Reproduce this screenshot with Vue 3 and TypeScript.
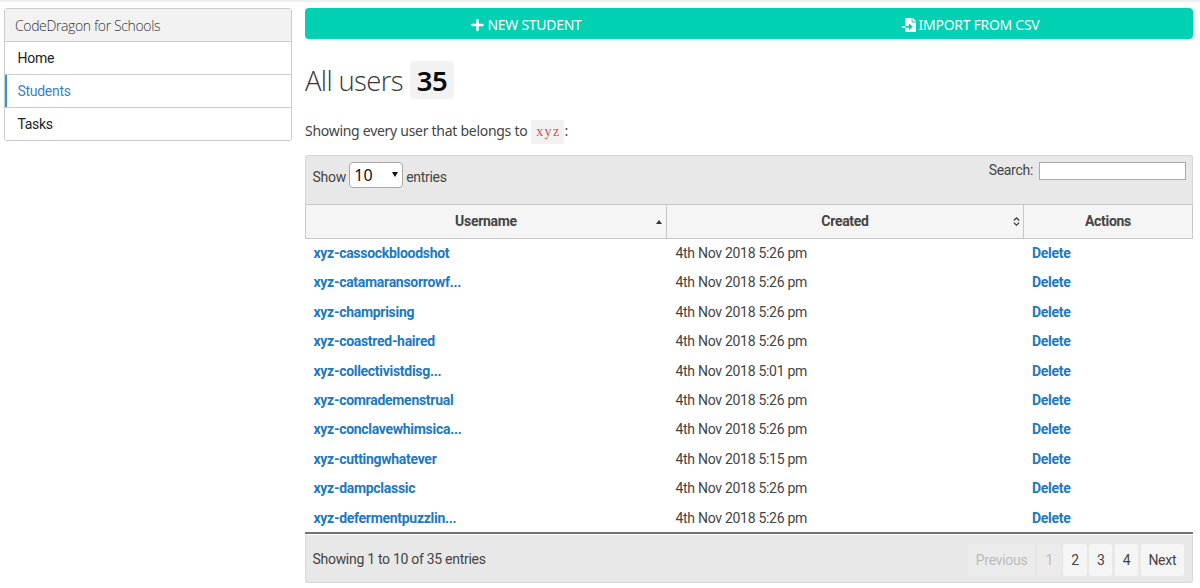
<script setup lang="ts">
import { ref } from 'vue'

interface Student {
  name: string
  created: string
}

const nav = ['Home', 'Students', 'Tasks']
const active = ref('Students')
const search = ref('')

const students: Student[] = [
  { name: 'xyz-cassockbloodshot', created: '4th Nov 2018 5:26 pm' },
  { name: 'xyz-catamaransorrowf...', created: '4th Nov 2018 5:26 pm' },
  { name: 'xyz-champrising', created: '4th Nov 2018 5:26 pm' },
  { name: 'xyz-coastred-haired', created: '4th Nov 2018 5:26 pm' },
  { name: 'xyz-collectivistdisg...', created: '4th Nov 2018 5:01 pm' },
  { name: 'xyz-comrademenstrual', created: '4th Nov 2018 5:26 pm' },
  { name: 'xyz-conclavewhimsica...', created: '4th Nov 2018 5:26 pm' },
  { name: 'xyz-cuttingwhatever', created: '4th Nov 2018 5:15 pm' },
  { name: 'xyz-dampclassic', created: '4th Nov 2018 5:26 pm' },
  { name: 'xyz-defermentpuzzlin...', created: '4th Nov 2018 5:26 pm' },
]
</script>

<template>
  <div class="page">
    <aside class="panel">
      <p class="panel-heading"><span>CodeDragon for Schools</span></p>
      <a v-for="item in nav" :key="item" class="panel-item" :class="{ active: item === active }" @click="active = item">
        <span>{{ item }}</span>
      </a>
    </aside>

    <main class="main">
      <div class="actions">
        <a class="action">
          <svg class="icon-plus" viewBox="0 0 448 512"><path fill="currentColor" d="M416 208H272V64c0-17.67-14.33-32-32-32h-32c-17.67 0-32 14.33-32 32v144H32c-17.67 0-32 14.33-32 32v32c0 17.67 14.33 32 32 32h144v144c0 17.67 14.33 32 32 32h32c17.67 0 32-14.33 32-32V304h144c17.67 0 32-14.33 32-32v-32c0-17.67-14.33-32-32-32z" /></svg>
          <span>NEW STUDENT</span>
        </a>
        <a class="action">
          <svg class="icon-import" viewBox="0 0 512 512"><path fill="currentColor" d="M16 288c-8.800 0-16 7.200-16 16v32c0 8.800 7.200 16 16 16h112v-64zm489-183L407.100 7c-4.500-4.500-10.600-7-17-7H384v128h128v-6.100c0-6.300-2.500-12.400-7-16.900zm-153 31V0H152c-13.300 0-24 10.700-24 24v264h128v-65.200c0-14.300 17.300-21.400 27.400-11.300L379 308c6.600 6.700 6.600 17.400 0 24l-95.700 96.400c-10.100 10.100-27.400 3-27.400-11.300V352H128v136c0 13.300 10.700 24 24 24h336c13.300 0 24-10.700 24-24V160H376c-13.200 0-24-10.800-24-24z" /></svg>
          <span>IMPORT FROM CSV</span>
        </a>
      </div>

      <h1 class="title"><span>All users</span><strong class="count">35</strong></h1>
      <p class="intro"><span>Showing every user that belongs to</span><code>xyz</code><span>:</span></p>

      <section class="datatable">
        <div class="toolbar">
          <label class="length">
            <span class="label">Show</span>
            <span class="select"><span>10</span><i class="caret"></i></span>
            <span class="label">entries</span>
          </label>
          <label class="search"><span>Search:</span><input v-model="search" type="text" /></label>
        </div>

        <div class="row head">
          <div class="th"><span>Username</span><i class="asc"></i></div>
          <div class="th">
            <span>Created</span>
            <svg class="both" viewBox="0 0 7 9"><path d="M.8 3.500 3.500.9 6.200 3.500M.8 5.600 3.500 8.200 6.200 5.600" fill="none" stroke="#333" stroke-width="1.200" /></svg>
          </div>
          <div class="th"><span>Actions</span></div>
        </div>

        <div class="body">
          <div v-for="s in students" :key="s.name" class="row">
            <div class="td"><a>{{ s.name }}</a></div>
            <div class="td"><span>{{ s.created }}</span></div>
            <div class="td"><a>Delete</a></div>
          </div>
        </div>

        <div class="footer">
          <span class="info">Showing 1 to 10 of 35 entries</span>
          <nav class="pager">
            <a class="prev off">Previous</a>
            <a class="off">1</a>
            <a>2</a>
            <a>3</a>
            <a>4</a>
            <a class="next">Next</a>
          </nav>
        </div>
      </section>
    </main>
  </div>
</template>

<style>
body {
  background: #fff;
}
</style>

<style scoped>
* {
  box-sizing: border-box;
}

.page {
  display: grid;
  grid-template-columns: 288px 888px;
  column-gap: 13px;
  align-items: start;
  height: 588px;
  padding: 6px 0 0 4px;
  border-top: 2px solid #f0f0f0;
  overflow: hidden;
  font: 14px/20px Roboto, sans-serif;
  letter-spacing: -0.290px;
  color: #444;
}

.panel {
  border: 1px solid #ccc;
  border-radius: 3px;
  overflow: hidden;
}

.panel-heading {
  display: flex;
  align-items: center;
  height: 33px;
  margin: 0;
  padding: 1px 10px 0;
  background: #f2f2f2;
  border-bottom: 1px solid #ccc;
  font: 300 14px/20px 'Open Sans', sans-serif;
  letter-spacing: -0.370px;
  color: #363636;
}

.panel-item {
  display: flex;
  align-items: center;
  height: 33px;
  padding: 0 12.500px;
  border-bottom: 1px solid #ccc;
  color: #222;
  cursor: pointer;
}

.panel-item:last-child {
  height: 32px;
  border-bottom: 0;
}

.panel-item.active {
  color: #3b83c0;
  box-shadow: inset 2px 0 #3794d2;
}

.actions {
  display: grid;
  grid-template-columns: 443px 445px;
  height: 31px;
  border-radius: 4px;
  background: #00d1b2;
  color: #fff;
  font: 14px/20px 'Noto Sans', sans-serif;
}

.action {
  display: flex;
  align-items: center;
  justify-content: center;
  gap: 3px;
  padding-top: 2px;
}

.icon-plus {
  width: 13px;
  height: 14px;
}

.icon-import {
  width: 14px;
  height: 14px;
}

.title {
  display: flex;
  align-items: center;
  gap: 7px;
  height: 38px;
  margin: 22px 0 0;
  font: 300 27.500px/38px 'Open Sans', sans-serif;
  letter-spacing: -0.650px;
  color: #363636;
}

.title > span {
  padding-top: 1px;
}

.count {
  width: 44px;
  height: 38px;
  border-radius: 3px;
  background: #f2f2f2;
  text-align: center;
  font: 600 27.500px/40px 'Noto Sans', sans-serif;
  letter-spacing: -0.500px;
  color: #0a0a0a;
}

.intro {
  display: flex;
  align-items: center;
  height: 24px;
  margin: 21px 0 0;
  font: 14px/20px 'Noto Sans', sans-serif;
  letter-spacing: -0.280px;
}

.intro span {
  margin-top: -3px;
}

.intro code {
  width: 33px;
  height: 24px;
  margin-left: 4px;
  padding-left: 1px;
  background: #f2f2f2;
  text-align: center;
  font: 14px/23px 'Liberation Serif', serif;
  letter-spacing: 1.300px;
  color: #d0505a;
}

.datatable {
  margin-top: 11px;
}

.toolbar {
  display: flex;
  justify-content: space-between;
  align-items: flex-start;
  height: 49px;
  padding: 6px 6px 0 6.500px;
  border: 1px solid #d5d5d5;
  border-bottom: 0;
  border-radius: 3px 3px 0 0;
  background: #e8e8e8;
}

.length {
  display: flex;
  align-items: center;
  gap: 3.400px;
}

.label {
  padding-top: 3px;
}

.select {
  display: flex;
  align-items: center;
  justify-content: space-between;
  width: 53.500px;
  height: 26px;
  padding: 0 4px;
  border: 1px solid #a9a9a9;
  border-radius: 4px;
  background: #fff;
  font: 16px/24px 'Noto Sans', sans-serif;
  letter-spacing: 0;
  color: #111;
}

.caret {
  margin-top: -2px;
  border: 3px solid transparent;
  border-top: 5px solid #111;
  border-bottom: 0;
}

.search {
  display: flex;
  align-items: flex-start;
  gap: 6px;
  line-height: 16px;
}

.search input {
  width: 147px;
  height: 18px;
  padding: 0 3px;
  border: 1px solid #aaa;
  border-radius: 0;
  background: #fff;
  outline: 0;
  font: inherit;
}

.row {
  display: grid;
  grid-template-columns: 362px 356px 170px;
}

.head {
  height: 35px;
  border: 1px solid #c8c8c8;
  border-width: 1px 0 1px 1px;
  background: #f5f5f5;
  font-weight: 700;
  grid-template-columns: 361px 357px 169px;
}

.th {
  position: relative;
  display: flex;
  align-items: center;
  justify-content: center;
  padding-bottom: 1px;
  border-right: 1px solid #c8c8c8;
}

.asc {
  position: absolute;
  right: 4px;
  top: 15px;
  border: 3.500px solid transparent;
  border-bottom: 4px solid #333;
  border-top: 0;
}

.both {
  position: absolute;
  right: 3px;
  top: 12px;
  width: 7px;
  height: 9px;
}

.body {
  height: 295px;
  border-bottom: 2px solid #707270;
}

.body .row {
  height: 29.400px;
}

.body .row:first-child {
  height: 28.800px;
}

.td {
  display: flex;
  align-items: center;
  padding: 0 8px 0 8.500px;
}

.td:last-child {
  padding-left: 9px;
}

.td a {
  font-weight: 700;
  color: #2079c0;
}

.footer {
  display: flex;
  align-items: center;
  justify-content: space-between;
  height: 48px;
  margin-top: 1px;
  padding: 0 8px 0 6.500px;
  border: 1px solid #d8d8d8;
  border-top-color: #e8e8e8;
  border-radius: 0 0 3px 3px;
  background: #e8e8e8;
}

.pager {
  display: flex;
  gap: 2.400px;
  margin-top: 2px;
}

.pager a {
  width: 23.400px;
  height: 32px;
  border-radius: 2px;
  background: #f5f5f5;
  text-align: center;
  line-height: 32px;
}

.pager .prev {
  width: 67px;
}

.pager .next {
  width: 43.400px;
}

.pager .off {
  background: #ebebeb;
  color: #bbb;
}
</style>
